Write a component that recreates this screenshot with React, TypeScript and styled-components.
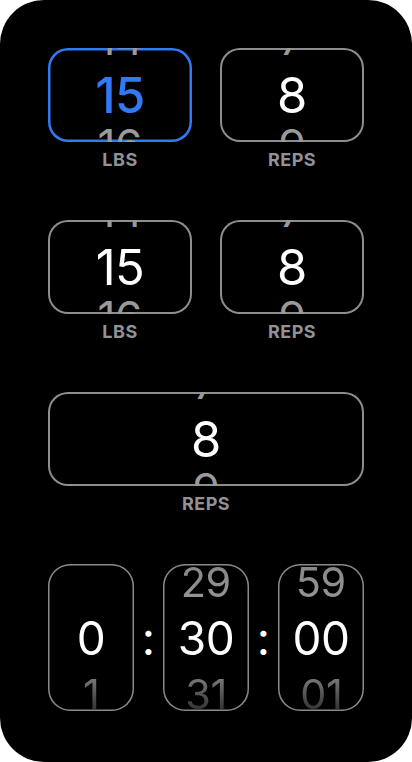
import React from "react";
import styled, { createGlobalStyle, css } from "styled-components";

const GlobalStyle = createGlobalStyle`
  html, body {
    margin: 0;
    padding: 0;
    background: #fff;
  }
  body {
    font-family: Inter, "Noto Sans", sans-serif;
  }
`;

const BLUE = "#3179f5";
const GRAY = "#8e8e92";

interface picker {
  values: string[];
  selected?: boolean;
  timer?: boolean;
}

const Picker: React.FC<picker> = ({ values, selected, timer }) => {
  return (
    <Box $selected={selected} $timer={timer}>
      <Wheel $timer={timer}>
        {values.map((v, i) => (
          <Item key={i} $ghost={i !== 1} $selected={selected} $timer={timer}>
            {v}
          </Item>
        ))}
      </Wheel>
    </Box>
  );
};

interface field {
  label: string;
  values: string[];
  selected?: boolean;
}

const Field: React.FC<field> = ({ label, values, selected }) => (
  <FieldDiv>
    <Picker values={values} selected={selected} />
    <Label>{label}</Label>
  </FieldDiv>
);

const App: React.FC = () => {
  return (
    <>
      <GlobalStyle />
      <Screen>
        <Row>
          <Field label="LBS" values={["14", "15", "16"]} selected />
          <Field label="REPS" values={["7", "8", "9"]} />
        </Row>
        <Row>
          <Field label="LBS" values={["14", "15", "16"]} />
          <Field label="REPS" values={["7", "8", "9"]} />
        </Row>
        <Row>
          <Field label="REPS" values={["7", "8", "9"]} />
        </Row>
        <TimerRow>
          <Picker timer values={["", "0", "1"]} />
          <Colon>:</Colon>
          <Picker timer values={["29", "30", "31"]} />
          <Colon>:</Colon>
          <Picker timer values={["59", "00", "01"]} />
        </TimerRow>
      </Screen>
    </>
  );
};

export default App;

const Screen = styled.div`
  width: 412px;
  height: 762px;
  box-sizing: border-box;
  padding: 48px 48px 0;
  background: #000;
  border-radius: 44px;
  overflow: hidden;
  display: flex;
  flex-direction: column;
  gap: 50px;
`;

const Row = styled.div`
  display: flex;
  gap: 28px;
`;

const FieldDiv = styled.div`
  flex: 1;
  display: flex;
  flex-direction: column;
  align-items: stretch;
`;

const Label = styled.div`
  margin-top: 8px;
  line-height: 20px;
  text-align: center;
  font-size: 18px;
  font-weight: 700;
  letter-spacing: 0.5px;
  color: #929296;
`;

const Box = styled.div<{ $selected?: boolean; $timer?: boolean }>`
  height: 94px;
  border-radius: 20px;
  overflow: hidden;
  display: flex;
  align-items: center;
  justify-content: center;
  box-shadow: inset 0 0 0 2px ${GRAY};
  ${(p) =>
    p.$selected &&
    css`
      box-shadow: inset 0 0 0 2.5px ${BLUE};
    `}
  ${(p) =>
    p.$timer &&
    css`
      width: 86px;
      height: 147px;
      flex: none;
      border-radius: 22px;
      box-shadow: inset 0 0 0 1.5px #8a8a8a;
    `}
`;

const Wheel = styled.div<{ $timer?: boolean }>`
  display: flex;
  flex-direction: column;
  align-items: center;
  ${(p) =>
    p.$timer &&
    css`
      mask-image: linear-gradient(
        to bottom,
        rgba(0, 0, 0, 0.85) 0%,
        #000 35%,
        #000 65%,
        rgba(0, 0, 0, 0.15) 100%
      );
    `}
`;

const Item = styled.div<{ $ghost?: boolean; $selected?: boolean; $timer?: boolean }>`
  height: ${(p) => (p.$timer ? 56 : 53)}px;
  line-height: ${(p) => (p.$timer ? 56 : 53)}px;
  font-size: ${(p) => (p.$timer ? 46 : 49)}px;
  font-weight: ${(p) => (p.$selected && !p.$ghost ? 500 : 400)};
  letter-spacing: -0.5px;
  white-space: nowrap;
  color: ${(p) => (p.$ghost ? "#9a9a9a" : p.$selected ? BLUE : "#fff")};
  transform: ${(p) =>
    !p.$ghost ? "none" : p.$timer ? "scale(0.9)" : "translateY(-3px) scale(0.9)"};
`;

const TimerRow = styled.div`
  display: flex;
  align-items: center;
`;

const Colon = styled.div`
  flex: 1;
  text-align: center;
  font-size: 46px;
  line-height: 56px;
  color: #fff;
`;
